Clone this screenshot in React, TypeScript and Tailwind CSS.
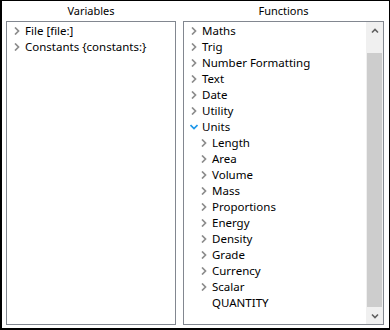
import React from 'react';

const Chevron: React.FC<{ open?: boolean }> = ({ open }) =>
  open ? (
    <svg width="8" height="8" viewBox="0 0 8 8" className="shrink-0">
      <path d="M0.5 2 L4 5.5 L7.5 2" fill="none" stroke="#1c97ea" strokeWidth="1.7" />
    </svg>
  ) : (
    <svg width="8" height="8" viewBox="0 0 8 8" className="shrink-0">
      <path d="M2 0.5 L5.5 4 L2 7.5" fill="none" stroke="#8c8c8c" strokeWidth="1.7" />
    </svg>
  );

interface Row {
  label: string;
  depth: number;
  kind: 'closed' | 'open' | 'leaf';
}

const variables: Row[] = [
  { label: 'File [file:]', depth: 0, kind: 'closed' },
  { label: 'Constants {constants:}', depth: 0, kind: 'closed' },
];

const functions: Row[] = [
  { label: 'Maths', depth: 0, kind: 'closed' },
  { label: 'Trig', depth: 0, kind: 'closed' },
  { label: 'Number Formatting', depth: 0, kind: 'closed' },
  { label: 'Text', depth: 0, kind: 'closed' },
  { label: 'Date', depth: 0, kind: 'closed' },
  { label: 'Utility', depth: 0, kind: 'closed' },
  { label: 'Units', depth: 0, kind: 'open' },
  { label: 'Length', depth: 1, kind: 'closed' },
  { label: 'Area', depth: 1, kind: 'closed' },
  { label: 'Volume', depth: 1, kind: 'closed' },
  { label: 'Mass', depth: 1, kind: 'closed' },
  { label: 'Proportions', depth: 1, kind: 'closed' },
  { label: 'Energy', depth: 1, kind: 'closed' },
  { label: 'Density', depth: 1, kind: 'closed' },
  { label: 'Grade', depth: 1, kind: 'closed' },
  { label: 'Currency', depth: 1, kind: 'closed' },
  { label: 'Scalar', depth: 1, kind: 'closed' },
  { label: 'QUANTITY', depth: 1, kind: 'leaf' },
];

const TreeRow: React.FC<{ row: Row }> = ({ row }) => (
  <div className={`flex h-4 items-center ${row.depth ? 'pl-[16px]' : 'pl-[6px]'}`}>
    <span className="flex w-[12px] items-center">
      {row.kind !== 'leaf' && <Chevron open={row.kind === 'open'} />}
    </span>
    <span className="whitespace-nowrap leading-4">{row.label}</span>
  </div>
);

export default function App() {
  return (
    <div
      className="flex h-[330px] w-[390px] flex-col border-t border-r border-l-2 border-b-2 border-black bg-white px-1 text-[11.5px] text-black"
      style={{ fontFamily: '"Segoe UI", "Noto Sans", sans-serif' }}
    >
      <div className="grid h-full grid-cols-[170px_201px] grid-rows-[20px_1fr] gap-x-[7px] pb-[3px]">
        <div className="flex items-center justify-center text-[11px]">Variables</div>
        <div className="flex items-center justify-center text-[11px]">Functions</div>
        <div className="border border-[#828790] pt-px">
          {variables.map((r) => (
            <TreeRow key={r.label} row={r} />
          ))}
        </div>
        <div className="flex border border-[#828790]">
          <div className="flex-1 pt-px">
            {functions.map((r) => (
              <TreeRow key={r.label} row={r} />
            ))}
          </div>
          <div className="flex w-[17px] flex-col bg-[#f0f0f0]">
            <div className="flex h-[17px] items-center justify-center">
              <svg width="8" height="6" viewBox="0 0 8 6">
                <path d="M1 4.5 L4 1.5 L7 4.5" fill="none" stroke="#606060" strokeWidth="1.6" />
              </svg>
            </div>
            <div className="mx-px mt-[14px] flex-1 bg-[#cdcdcd]" />
            <div className="flex h-[17px] items-center justify-center">
              <svg width="8" height="6" viewBox="0 0 8 6">
                <path d="M1 1.5 L4 4.5 L7 1.5" fill="none" stroke="#606060" strokeWidth="1.6" />
              </svg>
            </div>
          </div>
        </div>
      </div>
    </div>
  );
}
